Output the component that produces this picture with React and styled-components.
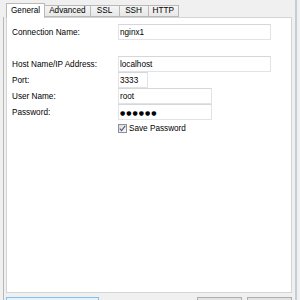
import React from 'react';
import styled, { createGlobalStyle } from 'styled-components';

const GlobalStyle = createGlobalStyle`
  html, body {
    margin: 0;
    padding: 0;
    background: #f0f0f0;
    overflow: hidden;
  }
  body {
    font-family: "Liberation Sans", Arial, sans-serif;
    font-size: 8.2px;
    color: #000;
  }
`;

const Window = styled.div`
  box-sizing: border-box;
  width: 297px;
  height: 300px;
  border-right: 2px solid #c6ccd4;
  display: flex;
  flex-direction: column;
  overflow: hidden;
`;

const TabRow = styled.div`
  display: flex;
  align-items: flex-end;
  height: 17px;
  padding-left: 6px;
`;

const Tab = styled.div`
  box-sizing: border-box;
  min-width: 30px;
  padding: 0 4px;
  height: ${(p) => (p.$active ? '15px' : '12px')};
  margin-bottom: ${(p) => (p.$active ? '-1px' : '0')};
  margin-left: ${(p) => (p.$first ? '0' : '-1px')};
  border: 1px solid #b9b9b9;
  border-bottom: ${(p) => (p.$active ? 'none' : '1px solid #b9b9b9')};
  background: ${(p) => (p.$active ? '#fff' : 'linear-gradient(#f5f5f5, #e8e8e8)')};
  position: relative;
  z-index: ${(p) => (p.$active ? 2 : 1)};
  display: flex;
  align-items: center;
  justify-content: center;
  line-height: 10px;
  white-space: nowrap;
`;

const Body = styled.div`
  flex: 1;
  margin-left: 3px;
  border-left: 1px solid #b8b8b8;
  padding-left: 2px;
  display: flex;
  flex-direction: column;
  min-height: 0;
`;

const Panel = styled.div`
  box-sizing: border-box;
  width: 286px;
  height: 276px;
  flex-shrink: 0;
  background: #fff;
  border: 1px solid #d4d4d4;
  padding: 6px 0 0 5px;
  display: grid;
  grid-template-columns: 106px 1fr;
  grid-auto-rows: 16px;
  align-content: start;
`;

const Label = styled.div`
  display: flex;
  align-items: center;
  white-space: nowrap;
`;

const Field = styled.input`
  box-sizing: border-box;
  width: ${(p) => p.$w}px;
  height: 16px;
  margin: 0;
  padding: 0 0 0 1px;
  border: 1px solid #e2e3e6;
  border-top-color: #d6d7da;
  font: inherit;
  font-family: ${(p) => (p.$mask ? '"DejaVu Sans", sans-serif' : 'inherit')};
  font-size: ${(p) => (p.$mask ? '6px' : 'inherit')};
  letter-spacing: ${(p) => (p.$mask ? '1px' : 'normal')};
  color: #000;
  background: #fff;
  outline: none;
`;

const Spacer = styled.div`
  grid-column: 1 / -1;
`;

const CheckRow = styled.label`
  grid-column: 2;
  display: flex;
  align-items: center;
  gap: 2px;
  margin-top: 4px;
  height: 9px;
`;

const Box = styled.span`
  box-sizing: border-box;
  width: 9px;
  height: 9px;
  border: 1px solid #8f8f8f;
  background: linear-gradient(135deg, #dcdcdc, #fafafa);
  display: flex;
  align-items: center;
  justify-content: center;
`;

const ButtonRow = styled.div`
  display: flex;
  gap: 5px;
  margin-top: 4px;
  width: 286px;
`;

const Button = styled.div`
  box-sizing: border-box;
  width: ${(p) => p.$w}px;
  height: 23px;
  border: 1px solid ${(p) => (p.$focus ? '#7cc4ec' : '#adadad')};
  background: ${(p) => (p.$focus ? '#e5f1fb' : '#e3e3e3')};
  margin-right: ${(p) => (p.$push ? 'auto' : '0')};
`;

const fields = [
  { label: 'Host Name/IP Address:', value: 'localhost', w: 153 },
  { label: 'Port:', value: '3333', w: 30 },
  { label: 'User Name:', value: 'root', w: 94 },
  { label: 'Password:', value: '●●●●●●', w: 94, mask: true },
];

const tabs = ['General', 'Advanced', 'SSL', 'SSH', 'HTTP'];

export default function App() {
  return (
    <>
      <GlobalStyle />
      <Window>
        <TabRow>
          {tabs.map((t, i) => (
            <Tab key={t} $active={i === 0} $first={i === 0}>
              {t}
            </Tab>
          ))}
        </TabRow>
        <Body>
          <Panel>
            <Label>Connection Name:</Label>
            <Field $w={153} defaultValue="nginx1" readOnly />
            <Spacer />
            {fields.map((f) => (
              <React.Fragment key={f.label}>
                <Label>{f.label}</Label>
                <Field $w={f.w} $mask={f.mask} defaultValue={f.value} readOnly />
              </React.Fragment>
            ))}
            <CheckRow>
              <Box>
                <svg width="7" height="7" viewBox="0 0 7 7">
                  <path d="M0.8 3.6 L2.6 5.6 L6.2 0.8" fill="none" stroke="#4b5e8c" strokeWidth="1.2" />
                </svg>
              </Box>
              Save Password
            </CheckRow>
          </Panel>
          <ButtonRow>
            <Button $w={93} $focus $push />
            <Button $w={45} />
            <Button $w={45} />
          </ButtonRow>
        </Body>
      </Window>
    </>
  );
}
